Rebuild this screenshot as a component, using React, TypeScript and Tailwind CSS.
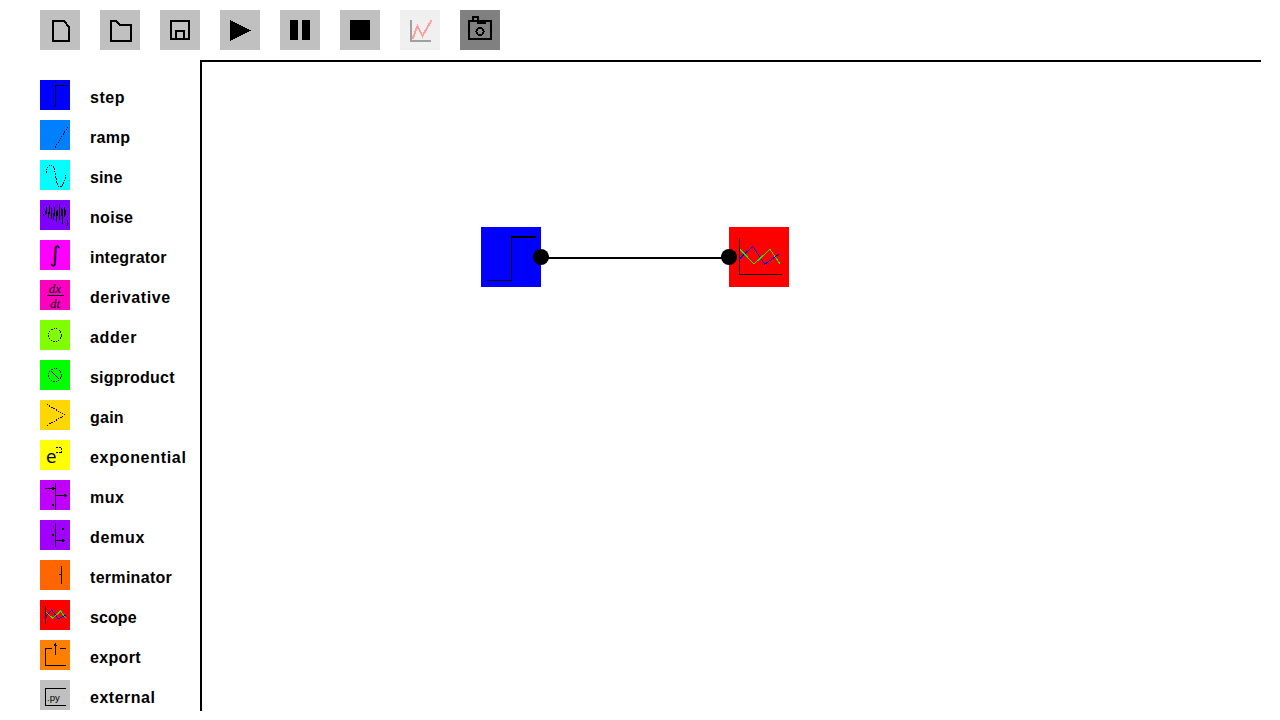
import React from 'react';

const toolbar = [
    { bg: 'bg-[#c0c0c0]', icon: <path d="M13 11H24L29 17V31H13Z" fill="none" stroke="#000" strokeWidth="2" /> },
    { bg: 'bg-[#c0c0c0]', icon: <path d="M11 31V11H16L20 15H31V31Z" fill="none" stroke="#000" strokeWidth="2" /> },
    {
        bg: 'bg-[#c0c0c0]',
        icon: (
            <>
                <rect x="11" y="11" width="18" height="18" fill="none" stroke="#000" strokeWidth="2" />
                <rect x="16" y="21" width="8" height="8" fill="none" stroke="#000" strokeWidth="2" />
            </>
        ),
    },
    { bg: 'bg-[#c0c0c0]', icon: <path d="M10 10L31 20.5L10 31Z" fill="#000" /> },
    {
        bg: 'bg-[#c0c0c0]',
        icon: (
            <>
                <rect x="10" y="10" width="8" height="20" fill="#000" />
                <rect x="22" y="10" width="8" height="20" fill="#000" />
            </>
        ),
    },
    { bg: 'bg-[#c0c0c0]', icon: <rect x="10" y="10" width="20" height="20" fill="#000" /> },
    {
        bg: 'bg-[#f0f0f0]',
        icon: (
            <>
                <path d="M11 10V31H31" fill="none" stroke="#a0a0a0" strokeWidth="2" />
                <path d="M12.5 29L17.5 16L22.5 26L31.5 10" fill="none" stroke="#ffa0a0" strokeWidth="2" />
            </>
        ),
    },
    {
        bg: 'bg-[#808080]',
        icon: (
            <>
                <path d="M13 10V7H18V10M9 11H31V29H9ZM18 11V13H25V11" fill="none" stroke="#000" strokeWidth="2" />
                <circle cx="20" cy="21.5" r="3.6" fill="none" stroke="#000" strokeWidth="2" />
            </>
        ),
    },
];

const Line = (props: { d: string; color?: string; w?: number; dash?: string }) => (
    <path d={props.d} fill="none" stroke={props.color || '#000'} strokeWidth={props.w || 1} strokeDasharray={props.dash} />
);

const blocks = [
    { name: 'step', tracking: 'tracking-[0.5px]', bg: 'bg-[#0000ff]', icon: <Line d="M15.5 27V5.5H28" /> },
    { name: 'ramp', tracking: 'tracking-[0.3px]', bg: 'bg-[#0080ff]', icon: <Line d="M15 27.5L28.5 6" dash="1.5 1" /> },
    { name: 'sine', tracking: 'tracking-[0.1px]', bg: 'bg-[#00ffff]', icon: <Line d="M6 13C7 8 9 5 11 5C14 5 15 12 16 18C17 24 18 27 20 27C23 27 25 20 26 15" dash="1.5 1" /> },
    {
        name: 'noise',
        tracking: 'tracking-[0.3px]',
        bg: 'bg-[#8000ff]',
        icon: <Line d="M3 14V16M5 11V15M6 7V14M8 12V18M9 5V14M11 8V19M13 13V20M14 7V16M16 11V22M17 10V16M19 4V20M21 8V16M22 9V24M24 7V17M25 10V15M27 20V26" />,
    },
    {
        name: 'integrator',
        tracking: 'tracking-[0.2px]',
        bg: 'bg-[#ff00ff]',
        icon: (
            <text x="15" y="22" textAnchor="middle" fontFamily="'DejaVu Sans', sans-serif" fontSize="22" fill="#000">
                ∫
            </text>
        ),
    },
    {
        name: 'derivative',
        tracking: 'tracking-[0.6px]',
        bg: 'bg-[#ff00c0]',
        icon: (
            <>
                <text x="15" y="13" textAnchor="middle" fontFamily="'Liberation Serif', serif" fontStyle="italic" fontSize="13" fill="#000">
                    dx
                </text>
                <Line d="M7 15.5H24" />
                <text x="15" y="28" textAnchor="middle" fontFamily="'Liberation Serif', serif" fontStyle="italic" fontSize="13" fill="#000">
                    dt
                </text>
            </>
        ),
    },
    { name: 'adder', tracking: 'tracking-[0.7px]', bg: 'bg-[#80ff00]', icon: <circle cx="15" cy="15" r="6.3" fill="none" stroke="#000" strokeWidth="1" strokeDasharray="1.5 1" /> },
    {
        name: 'sigproduct',
        tracking: 'tracking-[0.2px]',
        bg: 'bg-[#00ff00]',
        icon: (
            <>
                <circle cx="15" cy="15" r="6.3" fill="none" stroke="#000" strokeWidth="1" strokeDasharray="1.5 1" />
                <Line d="M11 11L19 19" />
            </>
        ),
    },
    { name: 'gain', tracking: 'tracking-[0.25px]', bg: 'bg-[#ffd700]', icon: <Line d="M7 4.5L25 15L7 25.5" dash="1.5 1" /> },
    {
        name: 'exponential',
        tracking: 'tracking-[0.7px]',
        bg: 'bg-[#ffff00]',
        icon: (
            <>
                <text x="6" y="23" fontFamily="'DejaVu Sans', sans-serif" fontSize="17" fill="#000">
                    e
                </text>
                <path d="M16 7H21.5V12.5H16" fill="none" stroke="#000" strokeWidth="1" strokeDasharray="2 1" />
            </>
        ),
    },
    {
        name: 'mux',
        tracking: 'tracking-[0.5px]',
        bg: 'bg-[#c000ff]',
        icon: (
            <>
                <Line d="M15.5 3V30M5 8.5H15.5M15.5 15.5H27" />
                <path d="M12 6.5L15 8.5L12 10.5ZM24 13.5L27 15.5L24 17.5Z" fill="#000" />
                <rect x="12" y="24" width="2" height="2" fill="#000" />
            </>
        ),
    },
    {
        name: 'demux',
        tracking: 'tracking-[0.7px]',
        bg: 'bg-[#a000ff]',
        icon: (
            <>
                <Line d="M15.5 3V27M15.5 20.5H25" />
                <path d="M22 18.5L25 20.5L22 22.5Z" fill="#000" />
                <rect x="12" y="14" width="2" height="2" fill="#000" />
                <rect x="22" y="8" width="2" height="2" fill="#000" />
            </>
        ),
    },
    { name: 'terminator', tracking: 'tracking-[0.3px]', bg: 'bg-[#ff6600]', icon: <Line d="M21.5 6V24M19 14.5H21" /> },
    {
        name: 'scope',
        tracking: 'tracking-[0.1px]',
        bg: 'bg-[#ff0000]',
        icon: (
            <>
                <Line d="M5.5 5.5V23.5" />
                <Line d="M5.7 16.7L11.7 10L18.3 19L25.7 15" color="#0000ff" />
                <Line d="M5.7 11.7L12.7 18.3L20.7 11L25.7 18.3" color="#00ff00" />
            </>
        ),
    },
    {
        name: 'export',
        tracking: 'tracking-[0.35px]',
        bg: 'bg-[#ff8000]',
        icon: (
            <>
                <Line d="M12 8.5H5.5V25.5H26M15.5 3.5V15M20 8.5H26" />
                <path d="M13.5 6L15.5 3L17.5 6Z" fill="#000" />
            </>
        ),
    },
    {
        name: 'external',
        tracking: 'tracking-[0.5px]',
        bg: 'bg-[#c0c0c0]',
        icon: (
            <>
                <Line d="M26 8.5H5.5V25.5H26" />
                <text x="7" y="20.5" fontFamily="'Liberation Sans', sans-serif" fontSize="9.5" fill="#000">
                    .py
                </text>
            </>
        ),
    },
];

export default function App() {
    return (
        <div className="w-[1280px] h-[720px] bg-white overflow-hidden font-['Liberation_Sans',sans-serif]">
            {/* Toolbar */}
            <div className="h-[60px] pt-[10px] pl-10 flex gap-5">
                {toolbar.map((tool, i) => (
                    <div key={i} className={`w-10 h-10 ${tool.bg}`}>
                        <svg width="40" height="40" viewBox="0 0 40 40" shapeRendering="crispEdges" className="block">
                            {tool.icon}
                        </svg>
                    </div>
                ))}
            </div>

            <div className="flex">
                {/* Block library */}
                <div className="w-[200px] pt-5 pl-10 flex flex-col gap-[10px]">
                    {blocks.map(block => (
                        <div key={block.name} className="flex items-center gap-5 h-[30px]">
                            <div className={`w-[30px] h-[30px] ${block.bg}`}>
                                <svg width="30" height="30" viewBox="0 0 30 30" shapeRendering="crispEdges" className="block">
                                    {block.icon}
                                </svg>
                            </div>
                            <span className={`text-[16px] font-bold text-black pt-[6px] ${block.tracking}`}>{block.name}</span>
                        </div>
                    ))}
                </div>

                {/* Canvas */}
                <div className="relative w-[1061px] h-[651px] border-t-2 border-l-2 border-black">
                    <div className="absolute left-[279px] top-[165px] w-[60px] h-[60px] bg-[#0000ff]">
                        <svg width="60" height="60" viewBox="0 0 60 60" shapeRendering="crispEdges" className="block">
                            <path d="M6 53.5H30.5V10" fill="none" stroke="#000" strokeWidth="1" />
                            <path d="M30 10H55" fill="none" stroke="#000" strokeWidth="2" />
                        </svg>
                    </div>
                    <div className="absolute left-[339px] top-[195px] w-[188px] h-[2px] bg-black" />
                    <div className="absolute left-[331px] top-[187px] w-4 h-4 rounded-full bg-black" />
                    <div className="absolute left-[527px] top-[165px] w-[60px] h-[60px] bg-[#ff0000]">
                        <svg width="60" height="60" viewBox="0 0 60 60" shapeRendering="crispEdges" className="block">
                            <path d="M10.5 11V47.5H53" fill="none" stroke="#000" strokeWidth="1" />
                            <path d="M10.3 32L23.7 19.3L35.7 37.3L49.7 27.3" fill="none" stroke="#0000ff" strokeWidth="1" />
                            <path d="M11 22.3L25 37L41 22.3L51 37" fill="none" stroke="#00ff00" strokeWidth="1" />
                        </svg>
                    </div>
                    <div className="absolute left-[519px] top-[187px] w-4 h-4 rounded-full bg-black" />
                </div>
            </div>
        </div>
    );
}
